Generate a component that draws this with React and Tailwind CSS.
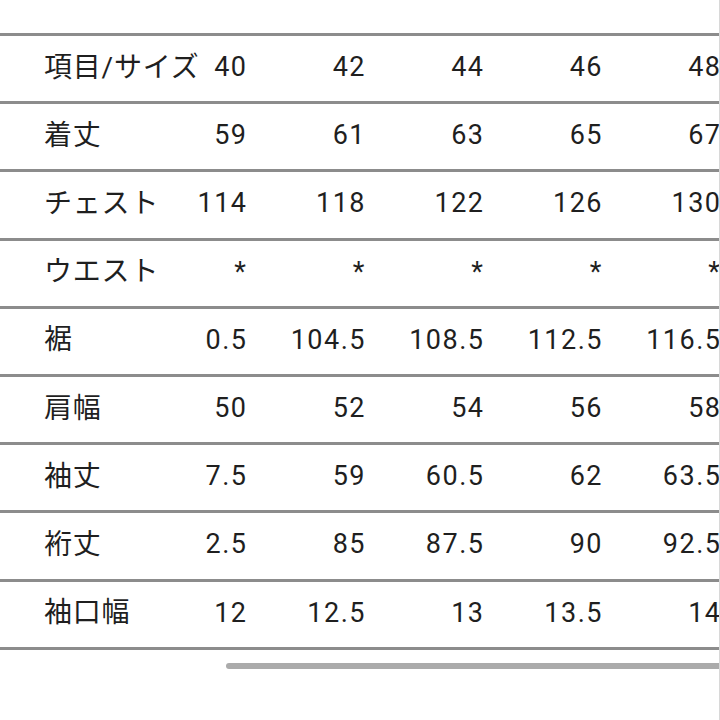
const ROWS = [
  ['項目/サイズ', '40', '42', '44', '46', '48'],
  ['着丈', '59', '61', '63', '65', '67'],
  ['チェスト', '114', '118', '122', '126', '130'],
  ['ウエスト', '*', '*', '*', '*', '*'],
  ['裾', '0.5', '104.5', '108.5', '112.5', '116.5'],
  ['肩幅', '50', '52', '54', '56', '58'],
  ['袖丈', '7.5', '59', '60.5', '62', '63.5'],
  ['裄丈', '2.5', '85', '87.5', '90', '92.5'],
  ['袖口幅', '12', '12.5', '13', '13.5', '14'],
]

export default function App() {
  return (
    <div
      className="relative h-[720px] w-[720px] overflow-hidden bg-white text-[#1f1f1f]"
      style={{ fontFamily: 'Roboto, "Noto Sans CJK JP", sans-serif' }}
    >
      <div className="pt-[33px]">
        <div className="h-[3px] w-[730px] bg-[#8c8c8c]" />
        {ROWS.map((row) => (
          <div
            key={row[0]}
            className="flex h-[68.2px] w-[730px] items-center border-b-[3px] border-[#8c8c8c] pb-[2px] text-[27px] leading-none"
          >
            <div className="w-[127.5px] shrink-0 whitespace-nowrap pl-[44px] text-[28px] tracking-[0.8px]">
              {row[0]}
            </div>
            {row.slice(1).map((v, i) => (
              <div key={i} className="w-[118.5px] shrink-0 whitespace-nowrap text-right">
                <span className="mr-[-1.5px] tracking-[1.5px]">{v}</span>
              </div>
            ))}
          </div>
        ))}
      </div>
      <div className="ml-[226px] mt-[13px] h-[6px] w-[500px] rounded-full bg-[#ababab]" />
      <div className="absolute right-0 top-0 h-full w-px bg-[#d8d8d8]" />
    </div>
  )
}
